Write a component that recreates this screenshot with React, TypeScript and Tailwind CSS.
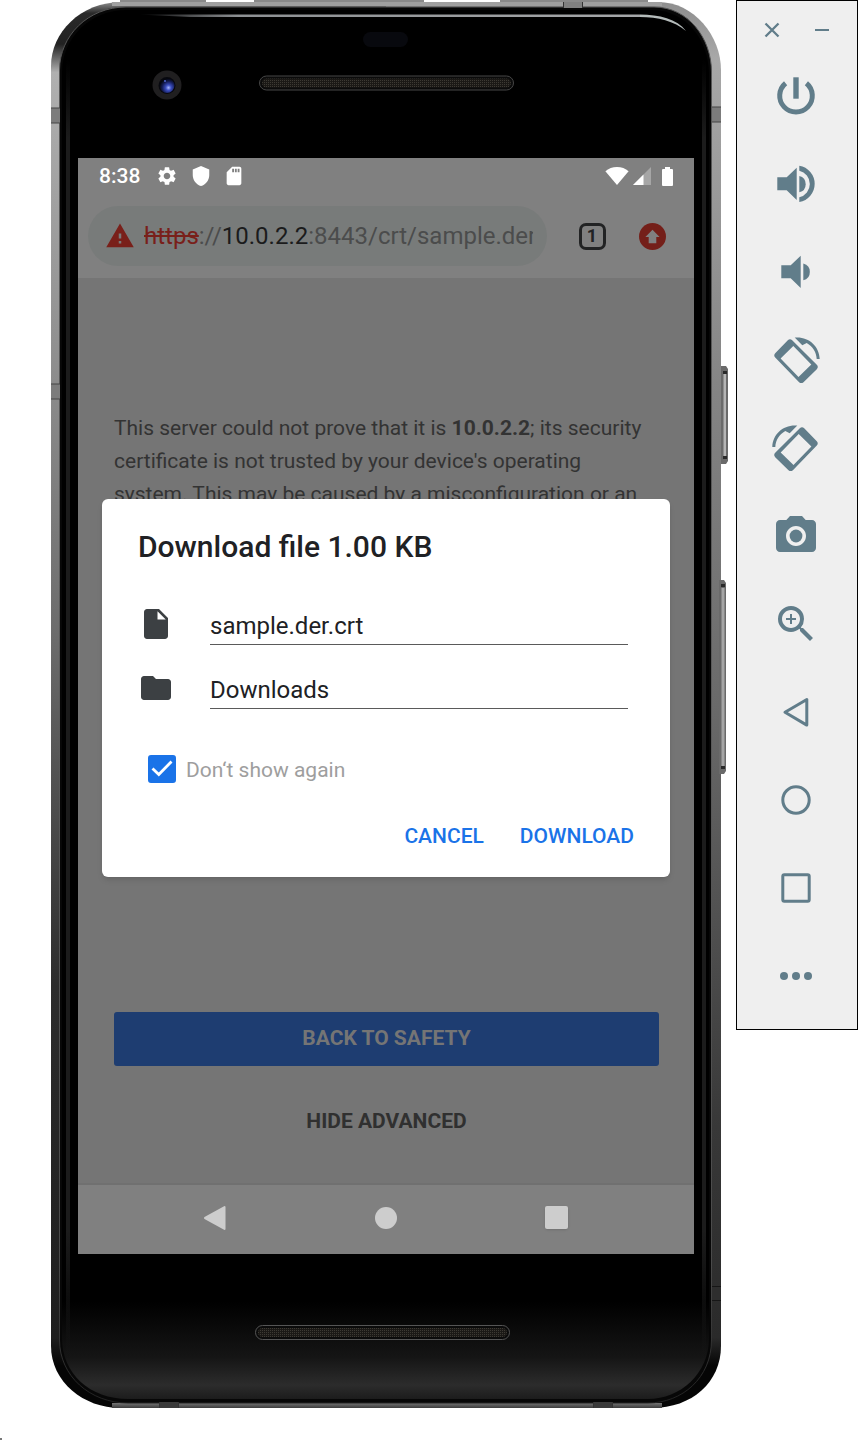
import type { ReactNode } from "react";
import {
  MdFolder,
  MdInsertDriveFile,
  MdPhotoCamera,
  MdSdCard,
  MdSettings,
  MdShield,
  MdWarning,
  MdZoomIn,
} from "react-icons/md";

function PhoneBody() {
  return (
    <svg
      className="absolute inset-0 h-full w-full"
      viewBox="0 0 678 1408"
      preserveAspectRatio="none"
      aria-hidden="true"
    >
      <defs>
        <linearGradient id="rim" x1="0" y1="0" x2="0" y2="1">
          <stop offset="0" stopColor="#8e8e8e" />
          <stop offset="0.008" stopColor="#2a2a2a" />
          <stop offset="0.03" stopColor="#222" />
          <stop offset="0.05" stopColor="#b0b0b0" />
          <stop offset="0.27" stopColor="#8c8c8c" />
          <stop offset="0.45" stopColor="#6c6c6c" />
          <stop offset="0.7" stopColor="#2c2c2c" />
          <stop offset="0.95" stopColor="#1e1e1e" />
          <stop offset="0.97" stopColor="#050505" />
          <stop offset="1" stopColor="#050505" />
        </linearGradient>
        <linearGradient id="rimRight" x1="0" y1="0" x2="0" y2="1">
          <stop offset="0" stopColor="#8e8e8e" />
          <stop offset="0.04" stopColor="#a8a8a8" />
          <stop offset="0.27" stopColor="#858585" />
          <stop offset="0.5" stopColor="#6a6a6a" />
          <stop offset="0.8" stopColor="#383838" />
          <stop offset="0.95" stopColor="#2a2a2a" />
          <stop offset="0.97" stopColor="#050505" />
          <stop offset="1" stopColor="#050505" />
        </linearGradient>
        <linearGradient id="glass" x1="0" y1="0" x2="0" y2="1">
          <stop offset="0" stopColor="#000" />
          <stop offset="0.93" stopColor="#000" />
          <stop offset="0.97" stopColor="#151515" />
          <stop offset="0.99" stopColor="#2c2c2c" />
          <stop offset="1" stopColor="#1c1c1c" />
        </linearGradient>
        <linearGradient id="shine" x1="0" y1="0" x2="0" y2="1">
          <stop offset="0" stopColor="#1c1c1c" stopOpacity="0" />
          <stop offset="0.06" stopColor="#1c1c1c" />
          <stop offset="0.9" stopColor="#1c1c1c" />
          <stop offset="1" stopColor="#1c1c1c" stopOpacity="0" />
        </linearGradient>
        <linearGradient id="seam" x1="0" y1="0" x2="0" y2="1">
          <stop offset="0" stopColor="#555" />
          <stop offset="0.5" stopColor="#5a5a5a" />
          <stop offset="0.9" stopColor="#4a4a4a" />
          <stop offset="1" stopColor="#222" />
        </linearGradient>
        <linearGradient id="topLine" gradientUnits="userSpaceOnUse" x1="88" y1="0" x2="590" y2="0">
          <stop offset="0" stopColor="#a0a4a8" stopOpacity="0" />
          <stop offset="0.2" stopColor="#8d9093" />
          <stop offset="1" stopColor="#a4a6a8" />
        </linearGradient>
        <linearGradient id="bottomRim" x1="0" y1="0" x2="0" y2="1">
          <stop offset="0" stopColor="#747474" />
          <stop offset="1" stopColor="#3c3c3c" />
        </linearGradient>
        <radialGradient id="lens" cx="0.6" cy="0.65" r="0.6">
          <stop offset="0" stopColor="#a9b8ff" />
          <stop offset="0.3" stopColor="#3b4ec0" />
          <stop offset="0.7" stopColor="#141c55" />
          <stop offset="1" stopColor="#05070f" />
        </radialGradient>
        <pattern id="mesh" width="2" height="2" patternUnits="userSpaceOnUse">
          <rect width="2" height="2" fill="#1b1916" />
          <rect width="1" height="1" fill="#3d3a34" />
        </pattern>
      </defs>

      <path d="M671 366h5l2 3v92l-2 3h-5z" fill="#6a6a6a" />
      <path d="M673.500 374h2.500v82h-2.500z" fill="#b5b5b5" />
      <path d="M673 371h4v3h-4zM673 456h4v3h-4z" fill="#2a2a2a" />

      <path d="M70 0h86v3H70zM204 0h170v3H204zM450 0h148v3H450z" fill="#8a8a8a" />
      <path d="M336 2H72C30 2 1 33 1 66V1346C1 1382 34 1408 70 1408H336Z" fill="url(#rim)" />
      <path
        d="M336 2H608C644 2 671 36 671 70V1346C671 1382 642 1408 602 1408H336Z"
        fill="url(#rimRight)"
      />
      <rect x="62" y="2" width="550" height="4" fill="#a0a0a0" />
      <rect x="62" y="1403" width="550" height="5" fill="url(#bottomRim)" />
      <path
        d="M9.500 1340V70C9.500 36 38 7 76 7H604C638 7 661.500 38 661.500 72V1340C661.500 1378 632 1403 598 1403H78C40 1403 9.500 1376 9.500 1340Z"
        fill="#070707"
        stroke="url(#seam)"
      />
      <path
        d="M12 1338V72C12 38 40 10 76 10H602C636 10 659 40 659 74V1338C659 1374 630 1399 598 1399H78C40 1399 12 1374 12 1338Z"
        fill="url(#glass)"
      />
      <rect x="16" y="60" width="4" height="1300" fill="url(#shine)" />
      <rect x="652" y="60" width="4" height="1300" fill="url(#shine)" />
      <path d="M88 14.500H590V17H140Z" fill="url(#topLine)" />
      <path d="M590 14.500C609 14.500 627 19 636 31C624 21 608 17 590 17Z" fill="#b4bbba" />

      <path d="M1 108h9v15H1zM1 384h9v15H1zM662 107h9v15h-9z" fill="#7c7c7c" />
      <path d="M662 1287h9v13h-9z" fill="#2e2e2e" />
      <path
        d="M1 108h9M1 123h9M1 384h9M1 399h9M662 107h9M662 122h9"
        stroke="#444"
      />
      <path d="M662 1286.500h9M662 1300.500h9" stroke="#161616" />
      <path d="M513 2h20v6h-20z" fill="#808080" />
      <path d="M110 1402h19v6h-19zM543 1402h19v6h-19z" fill="#3a3a3a" />
      <path
        d="M513.500 2v6M532.500 2v6M109.500 1402v6M128.500 1402v6M543.500 1402v6M562.500 1402v6"
        stroke="#333"
      />

      <path d="M669 580h5l2 3v188l-2 3h-5z" fill="#6a6a6a" />
      <path d="M671.500 588h3v178h-3z" fill="#a6a6a6" />
      <path d="M671 584h4v3h-4zM671 766h4v3h-4z" fill="#2a2a2a" />

      <rect x="313" y="32" width="45" height="15" rx="7.500" fill="#08090e" />
      <circle cx="117" cy="85" r="14.500" fill="#201f20" />
      <circle cx="117" cy="85.500" r="8.500" fill="#07080e" />
      <circle cx="117" cy="85.500" r="7.500" fill="url(#lens)" />
      <circle cx="115" cy="81" r="1" fill="#5269cf" />
      <rect x="209.500" y="76" width="254" height="14" rx="7" fill="#0b0b0b" stroke="#464646" />
      <rect x="212" y="78.500" width="249" height="9" rx="4.500" fill="url(#mesh)" />
      <rect x="205.500" y="1325.500" width="254" height="14" rx="7" fill="#0b0b0b" stroke="#555" />
      <rect x="208" y="1328" width="249" height="9" rx="4.500" fill="url(#mesh)" />
    </svg>
  );
}

function StatusBar() {
  return (
    <div className="flex h-9 items-center justify-between px-[21px] text-white">
      <div className="flex items-center">
        <span className="text-[21px] leading-6 font-medium">8:38</span>
        <MdSettings className="ml-4 size-[22px]" />
        <MdShield className="ml-3 size-[22px]" />
        <MdSdCard className="ml-[11px] size-[22px]" />
      </div>
      <div className="flex items-center gap-1">
        <svg className="h-[18px] w-6" viewBox="0 0 24 18" fill="#fff" aria-hidden="true">
          <path d="M12 18L.4 4.200C3.500 1.600 7.500 0 12 0s8.500 1.600 11.600 4.200z" />
        </svg>
        <svg className="size-[18px]" viewBox="0 0 18 18" fill="#fff" aria-hidden="true">
          <path d="M0 18L18 0V18z" opacity=".3" />
          <path d="M0 18L10.500 7.500V18z" />
        </svg>
        <svg className="ml-[7px] h-[19px] w-[11px]" viewBox="0 0 11 19" fill="#fff" aria-hidden="true">
          <path d="M1 2h2V0h5v2h2q1 0 1 1v15q0 1-1 1H1q-1 0-1-1V3q0-1 1-1z" />
        </svg>
      </div>
    </div>
  );
}

function AddressBar() {
  return (
    <div className="flex h-[84px] items-center pr-3 pl-[10px]">
      <div className="flex h-[60px] min-w-0 flex-1 items-center rounded-full bg-[#787b7a] pr-[14px] pl-[17px]">
        <MdWarning className="size-[30px] shrink-0 text-[#79201a]" />
        <div className="ml-[9px] min-w-0 flex-1 overflow-hidden text-2xl leading-8 whitespace-nowrap text-[#4b4c4c]">
          <span className="text-[#79201a] line-through">https</span>://
          <span className="text-[#1b1b1c]">10.0.2.2</span>:8443/crt/sample.der
        </div>
      </div>
      <button
        type="button"
        aria-label="Switch tabs"
        className="ml-[15px] flex size-[60px] items-center justify-center"
      >
        <span className="flex size-[27px] items-center justify-center rounded-[7px] border-[3px] border-[#222324] text-lg font-bold text-[#222324]">
          1
        </span>
      </button>
      <button
        type="button"
        aria-label="Update browser"
        className="flex size-[60px] items-center justify-center"
      >
        <svg className="size-[27px]" viewBox="0 0 27 27" aria-hidden="true">
          <circle cx="13.500" cy="13.500" r="13.500" fill="#741f19" />
          <path d="M13.500 6.800L20.600 14h-3.300v6.200H9.700V14H6.400z" fill="#808080" />
        </svg>
      </button>
    </div>
  );
}

function WarningPage() {
  return (
    <div className="flex flex-1 flex-col bg-[#757575] pt-[134px] pr-[35px] pb-[34px] pl-9">
      <p className="text-[21px] leading-[33px] text-[#333]">
        This server could not prove that it is <b>10.0.2.2</b>; its security certificate is not
        trusted by your device's operating system. This may be caused by a misconfiguration or an
      </p>
      <button
        type="button"
        className="mt-auto h-[54px] rounded-[3px] bg-[#1e3d71] text-[21px] font-bold text-[#757575]"
      >
        BACK TO SAFETY
      </button>
      <button type="button" className="mt-[29px] h-[54px] text-[21px] font-bold text-[#303030]">
        HIDE ADVANCED
      </button>
    </div>
  );
}

function NavigationBar() {
  return (
    <div className="flex h-[71px] items-center justify-center gap-[110px] border-t-2 border-[#707070] bg-[#808080] pb-1">
      <button type="button" aria-label="Back" className="flex size-[60px] items-center justify-center">
        <svg className="size-6" viewBox="0 0 24 24" fill="#cdcdcd" aria-hidden="true">
          <path d="M20.500 0q1 0 1 1v22q0 1-1 1L.5 13q-1-1 0-2z" />
        </svg>
      </button>
      <button type="button" aria-label="Home" className="flex size-[60px] items-center justify-center">
        <span className="size-[22px] rounded-full bg-[#cdcdcd]" />
      </button>
      <button type="button" aria-label="Overview" className="flex size-[60px] items-center justify-center">
        <span className="size-[23px] rounded-[2px] bg-[#cdcdcd] shadow-sm" />
      </button>
    </div>
  );
}

function DownloadDialog() {
  return (
    <div className="absolute inset-0 flex items-center px-6 pb-9">
      <form
        role="dialog"
        aria-labelledby="dialog-title"
        className="w-full rounded-[6px] bg-white px-9 pt-[30px] pb-[13px] shadow-md"
      >
        <h1 id="dialog-title" className="text-3xl leading-9 font-medium text-[#202124]">
          Download file 1.00 KB
        </h1>
        <div className="mt-[41px] flex flex-col gap-[25px] pr-[6px]">
          <div className="flex items-start gap-9">
            <MdInsertDriveFile className="size-9 shrink-0 text-[#3c4043]" />
            <input
              aria-label="File name"
              defaultValue="sample.der.crt"
              className="h-[39px] min-w-0 flex-1 border-b border-[#5a5a5a] pt-[2px] text-2xl text-[#202124] outline-none"
            />
          </div>
          <div className="flex items-start gap-9">
            <MdFolder className="size-9 shrink-0 text-[#3c4043]" />
            <select
              aria-label="Folder"
              className="h-[39px] min-w-0 flex-1 appearance-none border-b border-[#5a5a5a] pt-[2px] text-2xl text-[#202124] outline-none"
            >
              <option>Downloads</option>
            </select>
          </div>
        </div>
        <label className="mt-11 flex h-8 items-center gap-[10px] pl-[10px] text-[21px] text-[#9e9e9e]">
          <span className="relative flex size-7">
            <input
              type="checkbox"
              defaultChecked
              className="peer size-7 appearance-none rounded-[3px] border-2 border-[#5f6368] checked:border-[#1a73e8] checked:bg-[#1a73e8]"
            />
            <svg
              className="pointer-events-none absolute inset-0 hidden size-7 peer-checked:block"
              viewBox="0 0 28 28"
              fill="none"
              stroke="#fff"
              strokeWidth="2.800"
              aria-hidden="true"
            >
              <path d="M4.500 13.500L10.800 19.500 23.500 6.500" />
            </svg>
          </span>
          <span className="pt-[3px]">Don‘t show again</span>
        </label>
        <div className="mt-[25px] flex justify-end gap-9 text-[21px] font-medium text-[#1a73e8]">
          <button type="button" className="h-[54px]">
            CANCEL
          </button>
          <button type="button" className="h-[54px]">
            DOWNLOAD
          </button>
        </div>
      </form>
    </div>
  );
}

function Glyph({ children }: { children: ReactNode }) {
  return (
    <svg className="size-12" viewBox="0 0 48 48" fill="currentColor" aria-hidden="true">
      {children}
    </svg>
  );
}

const rotateShapes = (
  <>
    <path
      fillRule="evenodd"
      d="M15.800 4.200Q18 2.200 20.200 4.200L44.800 28.800Q46.800 31 44.800 33.200L31.500 46.200Q29.300 48 27.100 46.200L3.200 21.600Q1.300 19.400 3.200 17.200ZM21.300 10L8.600 22.500 26.500 41 39.300 28.600Z"
    />
    <path d="M22.700 1.600C36.500.3 47.200 10 47.700 23H44.700C44.300 16.200 40.800 10.500 34.700 7L30.300 9.200Z" />
  </>
);

const controls: { label: string; icon: ReactNode }[] = [
  {
    label: "Power",
    icon: (
      <Glyph>
        <path
          d="M13.600 11.200A16.300 16.300 0 1 0 34.400 11.200"
          fill="none"
          stroke="currentColor"
          strokeWidth="5"
        />
        <path d="M21.300 5.300h5.400v21.400h-5.400z" />
      </Glyph>
    ),
  },
  {
    label: "Volume up",
    icon: (
      <Glyph>
        <path d="M5.300 17.300H14.700L24.700 7.700V40L14.700 30.300H5.300Z" />
        <path d="M27.300 16A8.400 8.400 0 0 1 27.300 32.300Z" />
        <path d="M27.300 5.700A18.400 18.400 0 0 1 27.300 42V37.200A13.600 13.600 0 0 0 27.300 10.700Z" />
      </Glyph>
    ),
  },
  {
    label: "Volume down",
    icon: (
      <Glyph>
        <path d="M9.300 17.300H18.700L28.700 7.700V40L18.700 30.300H9.300Z" />
        <path d="M31.300 15.600A8.600 8.600 0 0 1 31.300 32.300Z" />
      </Glyph>
    ),
  },
  { label: "Rotate left", icon: <Glyph>{rotateShapes}</Glyph> },
  {
    label: "Rotate right",
    icon: (
      <Glyph>
        <g transform="matrix(-1 0 0 1 48 0)">{rotateShapes}</g>
      </Glyph>
    ),
  },
  { label: "Take screenshot", icon: <MdPhotoCamera className="size-12" /> },
  { label: "Zoom mode", icon: <MdZoomIn className="size-12" /> },
  {
    label: "Back",
    icon: (
      <Glyph>
        <path
          d="M13 24.300L34.800 11.500V37.100Z"
          fill="none"
          stroke="currentColor"
          strokeWidth="3"
          strokeLinejoin="round"
        />
      </Glyph>
    ),
  },
  {
    label: "Home",
    icon: (
      <Glyph>
        <circle cx="24" cy="24" r="13.200" fill="none" stroke="currentColor" strokeWidth="3" />
      </Glyph>
    ),
  },
  {
    label: "Overview",
    icon: (
      <Glyph>
        <rect
          x="10.800"
          y="10.800"
          width="26.400"
          height="26.400"
          rx="1.500"
          fill="none"
          stroke="currentColor"
          strokeWidth="3"
        />
      </Glyph>
    ),
  },
  {
    label: "More",
    icon: (
      <Glyph>
        <circle cx="12" cy="24" r="4" />
        <circle cx="24" cy="24" r="4" />
        <circle cx="36" cy="24" r="4" />
      </Glyph>
    ),
  },
];

function Controls() {
  return (
    <aside className="flex w-[122px] shrink-0 flex-col border border-black bg-[#efefef] pb-[9px] text-[#617d8a]">
      <div className="flex h-[51px] items-center justify-center gap-[34px] pt-[6px]">
        <button type="button" aria-label="Close">
          <svg className="size-4" viewBox="0 0 16 16" stroke="currentColor" strokeWidth="2.300" aria-hidden="true">
            <path d="M1.500 1.500L14.500 14.500M14.500 1.500L1.500 14.500" />
          </svg>
        </button>
        <button type="button" aria-label="Minimize">
          <svg className="size-4" viewBox="0 0 16 16" stroke="currentColor" strokeWidth="2" aria-hidden="true">
            <path d="M1 8H15" />
          </svg>
        </button>
      </div>
      <div className="flex flex-col pr-[2px]">
        {controls.map((control) => (
          <button
            key={control.label}
            type="button"
            aria-label={control.label}
            className="flex h-[88px] items-center justify-center"
          >
            {control.icon}
          </button>
        ))}
      </div>
    </aside>
  );
}

export default function App() {
  return (
    <div className="flex min-h-screen flex-col bg-white font-[Roboto,'Noto_Sans',sans-serif]">
      <div className="flex items-start">
        <main className="relative mr-2 ml-[50px] flex min-h-[1408px] min-w-0 flex-1 flex-col pt-[158px] pr-[34px] pb-[154px] pl-7">
          <PhoneBody />
          <div className="relative flex flex-1 flex-col overflow-hidden bg-[#808080]">
            <StatusBar />
            <AddressBar />
            <WarningPage />
            <NavigationBar />
            <DownloadDialog />
          </div>
        </main>
        <Controls />
      </div>
      <div className="mt-auto h-[2px] w-[2px] bg-[#777]" />
    </div>
  );
}
